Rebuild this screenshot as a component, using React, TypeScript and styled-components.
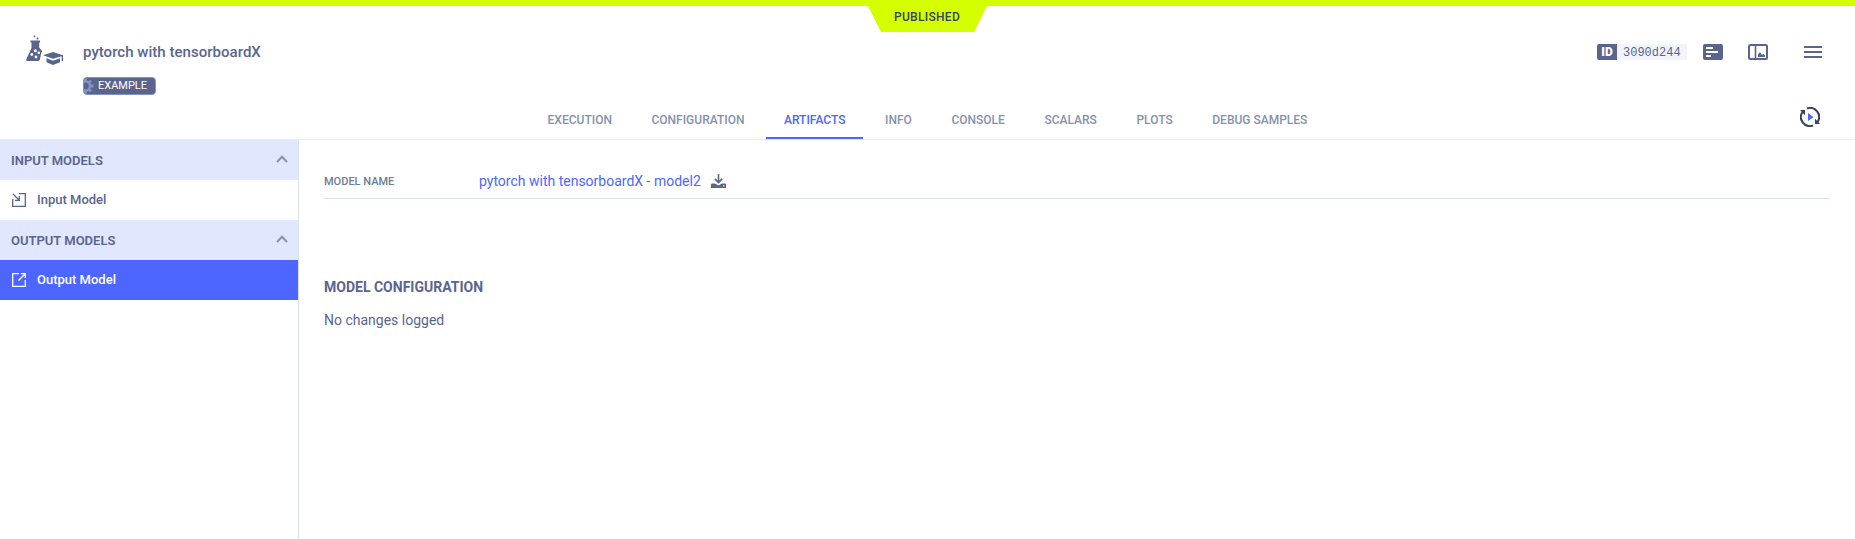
import React from "react";
import styled, { createGlobalStyle } from "styled-components";

const GlobalStyle = createGlobalStyle`
  *, *::before, *::after { box-sizing: border-box; }
  body {
    margin: 0;
    background: #fff;
    color: #5a658e;
    font-family: Roboto, "Liberation Sans", sans-serif;
    font-size: 14px;
  }
  svg { display: block; flex: none; }
`;

const Page = styled.div`
  display: flex;
  flex-direction: column;
  height: 100vh;
  overflow: hidden;
`;

const StatusBar = styled.div`
  display: flex;
  justify-content: center;
  flex: none;
  height: 6px;
  background: #d3ff00;
`;

const StatusLabel = styled.div`
  flex: none;
  width: 119px;
  height: 32px;
  padding: 6px 1px 0 0;
  clip-path: polygon(0 6px, 100% 6px, 106px 100%, 13px 100%);
  background: #d3ff00;
  color: #384161;
  font-size: 12px;
  font-weight: 500;
  line-height: 22px;
  letter-spacing: 0.3px;
  text-align: center;
`;

const Header = styled.header`
  display: flex;
  align-items: flex-start;
  flex: none;
  height: 94px;
  padding: 28px 33px 0 26px;
`;

const TypeIcon = styled.div`
  width: 57px;
`;

const TitleBlock = styled.div`
  display: flex;
  flex: 1;
  flex-direction: column;
  align-items: flex-start;
`;

const Title = styled.h1`
  margin: 7px 0 0;
  font-size: 15px;
  font-weight: 500;
  line-height: 22px;
  letter-spacing: 0.03px;
`;

const SystemTag = styled.span`
  display: flex;
  align-items: center;
  height: 18px;
  width: 73px;
  margin-top: 14px;
  overflow: hidden;
  border: 1px solid #8492c2;
  border-radius: 4px;
  background: #5a658e;
  color: #fff;
  font-size: 11px;
  line-height: 18px;
`;

const Actions = styled.div`
  display: flex;
  align-items: center;
  padding-top: 10px;
`;

const IdChip = styled.div`
  display: flex;
  height: 16px;
  width: 90px;
  margin-right: 16px;
  overflow: hidden;
  border-radius: 2px;
  background: #f2f4fc;
  font: 12px/18px "Liberation Mono", monospace;
`;

const IdMark = styled.span`
  width: 20px;
  margin-right: 6px;
  background: #5a658e;
  color: #fff;
  font: 900 12px/16px Roboto, sans-serif;
  text-align: center;
`;

const ActionIcon = styled.span<{ $gap?: number }>`
  margin-right: ${(p) => p.$gap ?? 0}px;
`;

const TabBar = styled.nav`
  display: grid;
  grid-template-columns: 1fr auto 1fr;
  flex: none;
  height: 40px;
  border-bottom: 1px solid #ebecf0;
`;

const TabList = styled.div`
  display: flex;
  grid-column: 2;
  gap: 3.6px;
`;

const Tab = styled.a<{ $active?: boolean }>`
  padding: 10px 18px 0;
  border-bottom: 2px solid ${(p) => (p.$active ? "#4d66ff" : "transparent")};
  color: ${(p) => (p.$active ? "#4d66ff" : "#8492ad")};
  font-size: 12px;
  font-weight: 500;
  line-height: 20px;
`;

const RefreshSlot = styled.div`
  display: flex;
  justify-content: flex-end;
  padding: 7px 35px 0 0;
`;

const Body = styled.div`
  display: flex;
  flex: 1;
`;

const Sidebar = styled.aside`
  flex: none;
  width: 299px;
  border-right: 1px solid #dce0ee;
`;

const GroupHeader = styled.div`
  display: flex;
  align-items: flex-start;
  justify-content: space-between;
  height: 40px;
  padding: 0 10px 0 11px;
  background: #e1e7ff;
  font-size: 13px;
  font-weight: 600;
  line-height: 42px;

  svg { margin-top: 15px; }
`;

const ModelRow = styled.div<{ $selected?: boolean }>`
  display: flex;
  align-items: center;
  height: 40px;
  padding-left: 12px;
  gap: 11px;
  background: ${(p) => (p.$selected ? "#4d66ff" : "#fff")};
  color: ${(p) => (p.$selected ? "#fff" : "#5a658e")};
  font-size: 13px;
  font-weight: 500;
`;

const ModelName = styled.span`
  padding-bottom: 2px;
`;

const Content = styled.main`
  flex: 1;
  padding: 22px 25px 0 25px;
`;

const Field = styled.div`
  display: flex;
  align-items: center;
  height: 37px;
  padding-top: 2px;
  border-bottom: 1px solid #dce0ee;
`;

const FieldLabel = styled.span`
  width: 155px;
  color: #707a95;
  font-size: 11px;
  font-weight: 500;
`;

const FieldLink = styled.a`
  margin-right: 10px;
  color: #4d66ff;
`;

const SectionTitle = styled.h2`
  margin: 78px 0 0;
  font-size: 14px;
  font-weight: 700;
  line-height: 20px;
`;

const Empty = styled.p`
  margin: 13px 0 0;
  line-height: 20px;
`;

const ExperimentIcon = () => (
  <svg width="38" height="32" viewBox="0 0 38 32" fill="#5a658e">
    <circle cx="8.5" cy="2.4" r="0.9" />
    <circle cx="11.5" cy="4.6" r="1" />
    <path d="M4.500 6.500H14v2h-.8v5l2.800 3.500q.3 1-.8 2L14 25q-.3 2-2 2H1.600c-1.200 0-1.700-1-1.200-2L5.500 14V8.500h-1z" />
    <circle cx="9.3" cy="16.8" r="1.5" fill="#fff" />
    <circle cx="12.8" cy="18.7" r="1.3" fill="#fff" />
    <circle cx="5.8" cy="20.5" r="1.4" fill="#fff" />
    <circle cx="10" cy="23" r="1.4" fill="#fff" />
    <path d="M17 21.200L27 18l10 3.200v5.800h-1.300v-4.800L27 24.800z" />
    <path d="M20.500 24.200L27 26.800l7-2.600v4L27 31l-6.500-2.800z" />
  </svg>
);

const GearIcon = () => (
  <svg width="14" height="16" viewBox="0 0 14 16" fill="none" stroke="#8492c2">
    <circle cx="1.5" cy="8" r="4.5" strokeWidth="2.6" />
    <path
      d="M1.500 3.500V.5M1.500 12.500v3M4.700 4.800l2.300-2.300M4.700 11.200l2.300 2.300M6 8h3.500"
      strokeWidth="2.8"
    />
  </svg>
);

const DetailsIcon = () => (
  <svg width="20" height="16" viewBox="0 0 20 16">
    <rect width="20" height="16" rx="2" fill="#5a658e" />
    <path d="M3 4h7M3 8h12M3 12h5" stroke="#fff" strokeWidth="2" />
  </svg>
);

const SplitViewIcon = () => (
  <svg width="20" height="16" viewBox="0 0 20 16" fill="none" stroke="#5a658e">
    <rect x="1" y="1" width="18" height="14" rx="1.5" strokeWidth="2" />
    <path d="M7.500 1v14" strokeWidth="1.6" />
    <path d="M10 13V10.500l2-2.500 2 3 1.300-1.300L17 11.500V13z" fill="#5a658e" stroke="none" />
  </svg>
);

const MenuIcon = () => (
  <svg width="18" height="16" viewBox="0 0 18 16" stroke="#5a658e" strokeWidth="2">
    <path d="M0 3h18M0 8h18M0 13h18" />
  </svg>
);

const AutoRefreshIcon = () => (
  <svg width="20" height="20" viewBox="0 0 20 20" fill="none" stroke="#384161" strokeWidth="2">
    <path d="M7 1.500A9 9 0 0 1 17.500 15M13 18.500A9 9 0 0 1 2.500 5" />
    <path d="M0 3h5v5.200zM20 17h-5v-5.200z" fill="#384161" stroke="none" />
    <path d="M8 6l5.500 4L8 14z" fill="#4d66ff" stroke="none" />
  </svg>
);

const ChevronIcon = () => (
  <svg width="12" height="8" viewBox="0 0 12 8" fill="none" stroke="#8492c2" strokeWidth="2">
    <path d="M1 7L6 1.800 11 7" />
  </svg>
);

const InputIcon = () => (
  <svg width="14" height="14" viewBox="0 0 14 14" fill="none" stroke="currentColor" strokeWidth="1.3">
    <path d="M7 .7h6.300v12.600H.7V6M1 1l6 6M7.300 3v4.300H3" />
  </svg>
);

const OutputIcon = () => (
  <svg width="14" height="14" viewBox="0 0 14 14" fill="none" stroke="currentColor" strokeWidth="1.3">
    <path d="M7 .7H.7v12.600h12.600V7M6.500 7.500L13 1M9 .7h4.300V5" />
  </svg>
);

const DownloadIcon = () => (
  <svg width="15" height="15" viewBox="0 0 15 15" fill="#5a658e">
    <path d="M6.700 0h1.600v6.500l2.300-2.300 1.100 1.200L7.500 9.700 3.300 5.400l1.100-1.200 2.300 2.300z" />
    <path d="M1 9.500h3l3.500 2 3.500-2h3q1 0 1 1V14H0v-3.500q0-1 1-1zM12 11.300v1.200h1.300v-1.200z" fillRule="evenodd" />
  </svg>
);

const TABS = ["EXECUTION", "CONFIGURATION", "ARTIFACTS", "INFO", "CONSOLE", "SCALARS", "PLOTS", "DEBUG SAMPLES"];

export default function App() {
  return (
    <Page>
      <GlobalStyle />
      <StatusBar>
        <StatusLabel>PUBLISHED</StatusLabel>
      </StatusBar>
      <Header>
        <TypeIcon><ExperimentIcon /></TypeIcon>
        <TitleBlock>
          <Title>pytorch with tensorboardX</Title>
          <SystemTag><GearIcon />EXAMPLE</SystemTag>
        </TitleBlock>
        <Actions>
          <IdChip><IdMark>ID</IdMark>3090d244</IdChip>
          <ActionIcon $gap={25}><DetailsIcon /></ActionIcon>
          <ActionIcon $gap={36}><SplitViewIcon /></ActionIcon>
          <ActionIcon><MenuIcon /></ActionIcon>
        </Actions>
      </Header>
      <TabBar>
        <TabList>
          {TABS.map((name) => <Tab key={name} $active={name === "ARTIFACTS"}>{name}</Tab>)}
        </TabList>
        <RefreshSlot><AutoRefreshIcon /></RefreshSlot>
      </TabBar>
      <Body>
        <Sidebar>
          <GroupHeader>INPUT MODELS<ChevronIcon /></GroupHeader>
          <ModelRow><InputIcon /><ModelName>Input Model</ModelName></ModelRow>
          <GroupHeader>OUTPUT MODELS<ChevronIcon /></GroupHeader>
          <ModelRow $selected><OutputIcon /><ModelName>Output Model</ModelName></ModelRow>
        </Sidebar>
        <Content>
          <Field>
            <FieldLabel>MODEL NAME</FieldLabel>
            <FieldLink>pytorch with tensorboardX - model2</FieldLink>
            <DownloadIcon />
          </Field>
          <SectionTitle>MODEL CONFIGURATION</SectionTitle>
          <Empty>No changes logged</Empty>
        </Content>
      </Body>
    </Page>
  );
}
